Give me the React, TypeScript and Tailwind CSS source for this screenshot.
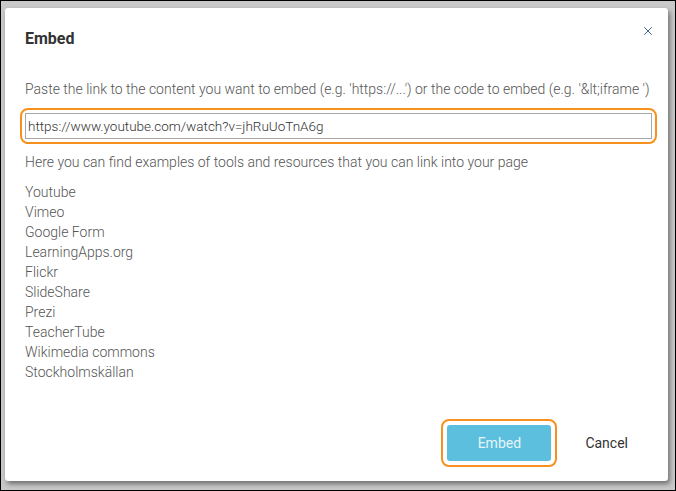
import { X } from "lucide-react";

const tools = [
  "Youtube",
  "Vimeo",
  "Google Form",
  "LearningApps.org",
  "Flickr",
  "SlideShare",
  "Prezi",
  "TeacherTube",
  "Wikimedia commons",
  "Stockholmskällan",
];

export default function App() {
  return (
    <div className="h-[491px] w-[676px] overflow-hidden border border-black bg-[#c9c9c9] pl-[4px] pt-[7px] font-['Roboto',sans-serif]">
      <div className="flex h-[473px] w-[663px] flex-col rounded-[3px] bg-white shadow-[2px_3px_5px_rgba(0,0,0,0.45)]">
        <header className="flex items-start justify-between pl-[20px] pr-[13px] pt-[21px]">
          <h1 className="text-[16px] font-bold leading-5 text-[#333333]">Embed</h1>
          <button className="-mt-[5px] text-[#2f5f8a]">
            <X size={14} strokeWidth={1.6} />
          </button>
        </header>

        <section className="flex-1 pl-[20px] pr-[18px] pt-[30px] text-[14px] font-light leading-5 text-[#555555]">
          <p className="whitespace-nowrap">
            Paste the link to the content you want to embed (e.g. 'https://...') or the code to embed (e.g. '&amp;lt;iframe ')
          </p>
          <div className="-ml-[5px] -mr-[7px] mt-[9px] rounded-[8px] border-2 border-[#f7911e] px-[3px] py-[3px]">
            <input
              className="block h-[26px] w-full border border-[#a8a8a8] px-[2px] text-[13.5px] font-light text-[#333333] outline-none"
              defaultValue="https://www.youtube.com/watch?v=jhRuUoTnA6g"
            />
          </div>
          <p className="mt-[8px]">Here you can find examples of tools and resources that you can link into your page</p>
          <ul className="mt-[10px]">
            {tools.map((tool) => (
              <li key={tool}>{tool}</li>
            ))}
          </ul>
        </section>

        <footer className="flex items-center justify-end gap-[8px] pb-[14px] pr-[20px]">
          <div className="rounded-[8px] border-2 border-[#f7911e] p-[4px]">
            <button className="h-[36px] w-[104px] rounded-[3px] bg-[#5bbfdd] text-[14px] text-[#e6f5fb]">Embed</button>
          </div>
          <button className="px-[20px] text-[14px] text-[#333333]">Cancel</button>
        </footer>
      </div>
    </div>
  );
}
